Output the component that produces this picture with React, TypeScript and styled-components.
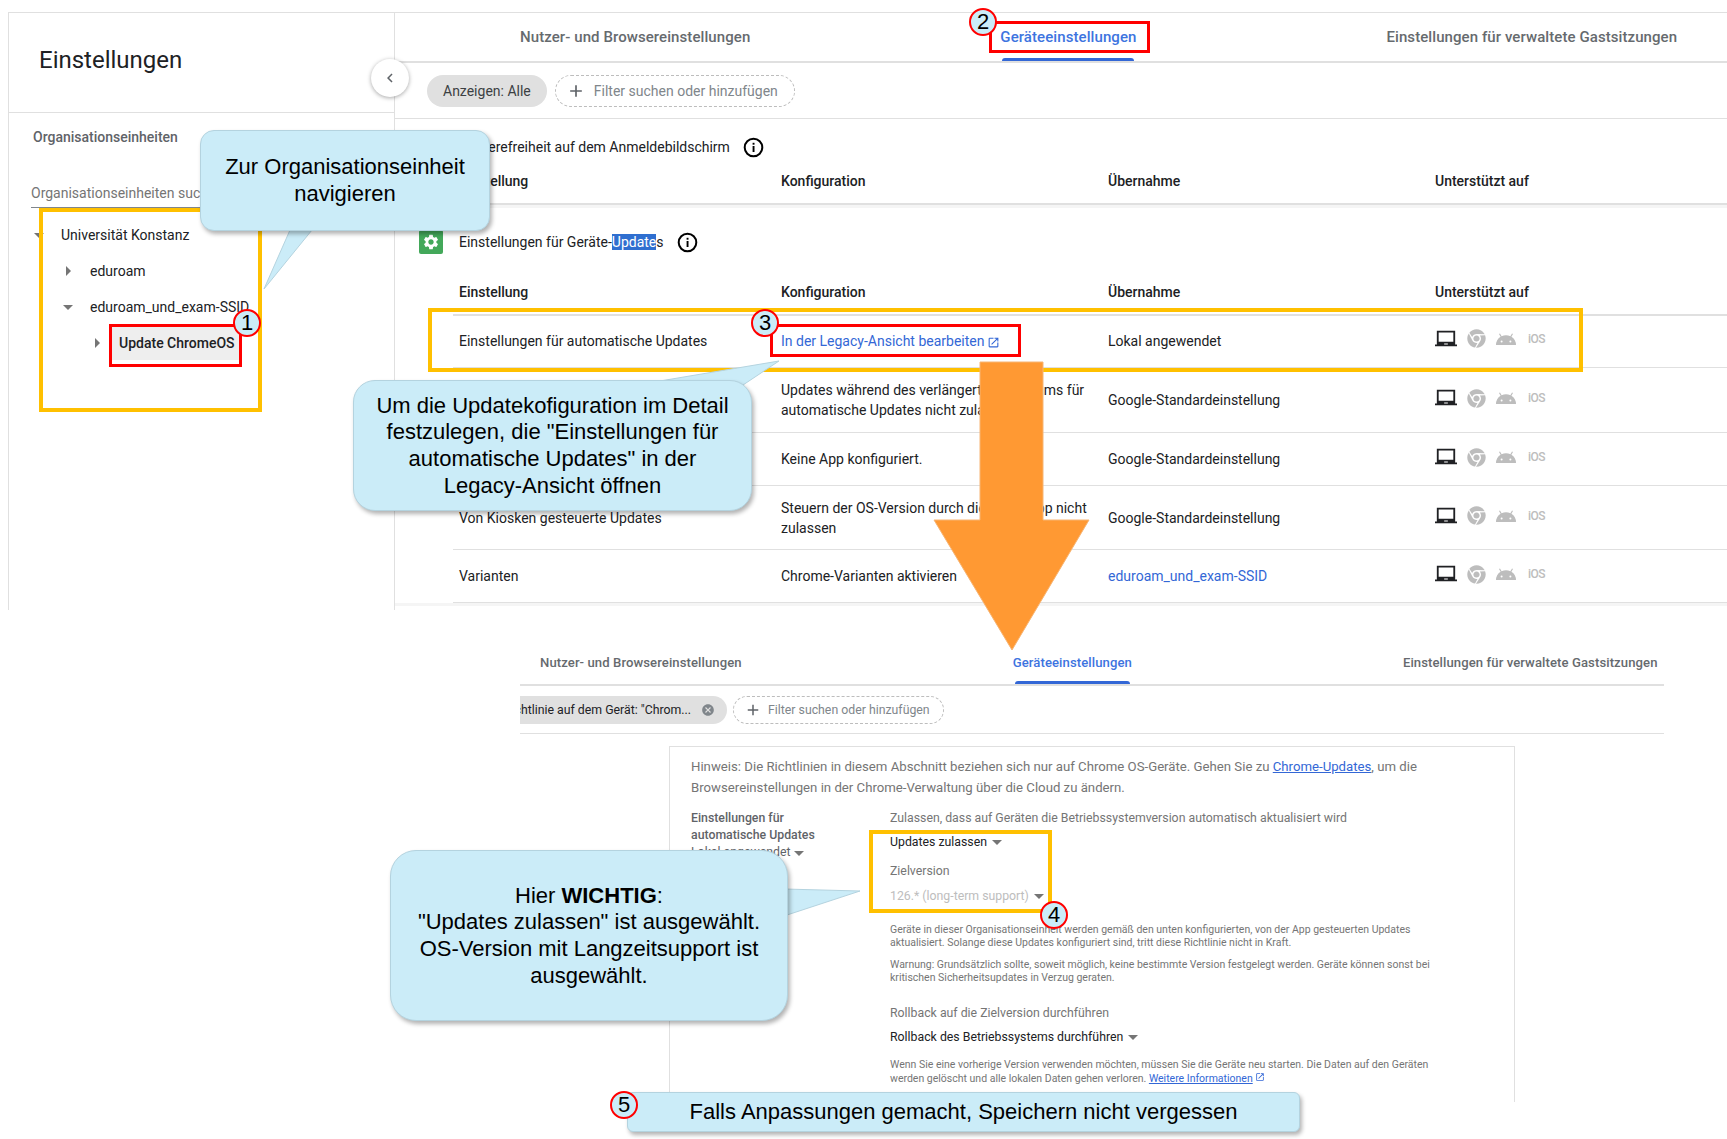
import React from 'react';
import styled, { createGlobalStyle } from 'styled-components';
import { FaChrome } from 'react-icons/fa';
import { MdAdd, MdCancel, MdChevronLeft, MdLaptopChromebook, MdOpenInNew, MdSettings } from 'react-icons/md';

const GlobalStyle = createGlobalStyle`
  html, body { margin: 0; padding: 0; background: #fff; }
  * { box-sizing: border-box; }
`;

const Page = styled.div`
  position: relative;
  width: 1727px;
  height: 1139px;
  overflow: hidden;
  background: #fff;
  font-family: Roboto, "Noto Sans", sans-serif;
  color: #202124;
`;

/* ---------- upper screenshot ---------- */
const TopShot = styled.div`
  display: flex;
  height: 598px;
  margin: 12px 0 0 8px;
  border-top: 1px solid #e0e0e0;
  border-left: 1px solid #e0e0e0;
`;
const Sidebar = styled.aside`
  flex: 0 0 386px;
  border-right: 1px solid #e0e0e0;
`;
const SideHeader = styled.div`
  display: flex;
  align-items: center;
  height: 100px;
  padding: 0 0 6px 30px;
  border-bottom: 1px solid #e0e0e0;
  font-size: 24px;
`;
const OrgTitle = styled.div`
  display: flex;
  align-items: center;
  height: 48px;
  padding-left: 24px;
  font-size: 14px;
  font-weight: 500;
  color: #5f6368;
`;
const OrgSearch = styled.div`
  display: flex;
  align-items: center;
  height: 47px;
  margin: 0 16px 0 22px;
  padding-top: 17px;
  border-bottom: 1px solid #80868b;
  font-size: 14px;
  color: #757575;
`;
const Tree = styled.div`
  margin-top: 9px;
  padding-left: 22px;
`;
const TreeRow = styled.div<{ $level: number }>`
  display: flex;
  align-items: center;
  height: 36px;
  margin-left: ${(p) => p.$level * 29}px;
  font-size: 14px;
`;
const CaretBox = styled.span`
  display: flex;
  align-items: center;
  justify-content: center;
  width: 16px;
  margin-right: 14px;
`;
const Caret = styled.span<{ $dir?: 'down' | 'right' }>`
  display: inline-block;
  width: 0;
  height: 0;
  ${(p) =>
    p.$dir === 'right'
      ? 'border-top: 5px solid transparent; border-bottom: 5px solid transparent; border-left: 5px solid #757575;'
      : 'border-left: 5px solid transparent; border-right: 5px solid transparent; border-top: 5px solid #757575;'}
`;
const TreeLabel = styled.span<{ $selected?: boolean }>`
  ${(p) =>
    p.$selected &&
    'margin-left: -7px; padding: 0 7px; line-height: 34px; font-weight: 500; background: #eeeeee;'}
`;

const Main = styled.main`
  flex: 1;
  min-width: 0;
`;
const Tabs = styled.div`
  display: flex;
  gap: 250px;
  height: 50px;
  padding-left: 125px;
  border-bottom: 2px solid #e0e0e0;
`;
const Tab = styled.div<{ $active?: boolean }>`
  position: relative;
  display: flex;
  align-items: center;
  font-size: 15px;
  font-weight: 500;
  letter-spacing: 0.08px;
  color: ${(p) => (p.$active ? '#3d74e0' : '#666a6e')};
  ${(p) =>
    p.$active &&
    `&::after {
      content: '';
      position: absolute;
      left: 2px;
      right: 2px;
      bottom: 0;
      height: 3px;
      border-radius: 3px 3px 0 0;
      background: #3367d6;
    }`}
`;
const FilterBar = styled.div`
  display: flex;
  align-items: center;
  gap: 8px;
  height: 56px;
  padding-left: 32px;
  border-bottom: 1px solid #e0e0e0;
`;
const Chip = styled.div`
  display: flex;
  align-items: center;
  height: 32px;
  padding: 0 16px;
  border-radius: 16px;
  background: #e0e0e0;
  font-size: 14px;
  color: #3c4043;
`;
const AddFilter = styled.div`
  display: flex;
  align-items: center;
  gap: 8px;
  height: 32px;
  padding: 0 16px 0 10px;
  border: 1px dashed #bdbdbd;
  border-radius: 16px;
  font-size: 14px;
  color: #80868b;
`;
const Section = styled.section<{ $top: number }>`
  padding-top: ${(p) => p.$top}px;
`;
const SectionTitle = styled.div`
  display: flex;
  align-items: center;
  height: 44px;
  margin-left: 24px;
  font-size: 14px;
`;
const TitleText = styled.span<{ $indent?: number }>`
  margin-left: ${(p) => p.$indent ?? 0}px;
`;
const GreenIcon = styled.span`
  display: flex;
  align-items: center;
  justify-content: center;
  width: 24px;
  height: 24px;
  border-radius: 2px;
  background: #43a85a;
  color: #fff;
`;
const Selected = styled.span`
  background: #2f6fd0;
  color: #fff;
`;
const Info = styled.svg`
  width: 21px;
  height: 21px;
  margin-left: 13px;
`;
const HeadRow = styled.div<{ $mt: number }>`
  display: grid;
  grid-template-columns: 322px 327px 327px 1fr;
  align-items: center;
  height: 35px;
  margin-top: ${(p) => p.$mt}px;
  margin-left: 58px;
  padding: 0 0 11px 6px;
  font-size: 14px;
  font-weight: 500;
  border-bottom: 2px solid #e0e0e0;
`;
const Band = styled.div`
  height: 3px;
  background: #f5f5f5;
`;
const Row = styled.div<{ $h: number; $pb: number }>`
  display: grid;
  grid-template-columns: 322px 327px 327px 1fr;
  align-items: center;
  height: ${(p) => p.$h}px;
  margin-left: 58px;
  padding: 0 0 ${(p) => p.$pb}px 6px;
  font-size: 14px;
  line-height: 20px;
  border-bottom: 1px solid #e0e0e0;
`;
const ConfigCell = styled.span`
  padding-right: 16px;
`;
const CellLink = styled.a`
  color: #3367d6;
  text-decoration: none;
`;
const LinkIcon = styled(MdOpenInNew)`
  margin-left: 3px;
  vertical-align: -3px;
`;
const Platforms = styled.div`
  display: flex;
  align-items: center;
  margin-bottom: 4px;
  color: #bdbdbd;
`;
const Laptop = styled(MdLaptopChromebook)`
  color: #202124;
`;
const Chrome = styled(FaChrome)`
  margin-left: 10px;
`;
const Android = styled.svg`
  width: 20px;
  height: 12px;
  margin-left: 10px;
`;
const Ios = styled.span`
  margin-left: 12px;
  font-size: 12px;
  font-weight: 500;
  letter-spacing: -0.6px;
`;

/* ---------- lower screenshot ---------- */
const BottomShot = styled.div`
  width: 1144px;
  margin: 30px 0 0 520px;
`;
const SmallTabs = styled.div`
  display: flex;
  gap: 271px;
  height: 46px;
  padding-left: 20px;
  border-bottom: 2px solid #e0e0e0;
`;
const SmallTab = styled(Tab)`
  font-size: 13.1px;
  letter-spacing: 0.09px;
`;
const SmallFilterBar = styled.div`
  display: flex;
  align-items: center;
  gap: 6px;
  height: 48px;
  border-bottom: 1px solid #e0e0e0;
`;
const ClippedChip = styled.div`
  display: flex;
  align-items: center;
  justify-content: flex-end;
  width: 207px;
  height: 28px;
  padding-right: 12px;
  overflow: hidden;
  white-space: nowrap;
  border-radius: 0 14px 14px 0;
  background: #e0e0e0;
  font-size: 12.3px;
`;
const ChipClose = styled(MdCancel)`
  flex: none;
  margin-left: 10px;
  color: #80868b;
`;
const SmallAddFilter = styled(AddFilter)`
  gap: 6px;
  height: 28px;
  padding: 0 13px 0 10px;
  font-size: 12.3px;
`;
const PolicyCard = styled.div`
  width: 846px;
  height: 356px;
  margin: 12px 0 0 149px;
  padding: 10px 20px 0 21px;
  border: 1px solid #e0e0e0;
  border-bottom: 0;
`;
const Hinweis = styled.p`
  margin: 0;
  font-size: 13.2px;
  line-height: 20.5px;
  color: #757575;
`;
const InlineLink = styled.a`
  color: #3367d6;
  text-decoration: underline;
`;
const PolicyRow = styled.div`
  display: flex;
  margin-top: 12px;
`;
const PolicyLabel = styled.div`
  flex: 0 0 199px;
  font-size: 12.3px;
  font-weight: 500;
  line-height: 17px;
  color: #5f6368;
`;
const PolicyState = styled.div`
  font-weight: 400;
`;
const PolicyBody = styled.div`
  flex: 1;
  min-width: 0;
`;
const FieldLabel = styled.div<{ $mt?: number }>`
  margin-top: ${(p) => p.$mt ?? 0}px;
  font-size: 12.3px;
  line-height: 17px;
  color: #757575;
`;
const SelectValue = styled.div<{ $mt: number; $disabled?: boolean }>`
  display: flex;
  align-items: center;
  gap: 5px;
  margin-top: ${(p) => p.$mt}px;
  font-size: 12.3px;
  line-height: 17px;
  color: ${(p) => (p.$disabled ? '#bdbdbd' : '#202124')};
`;
const Note = styled.p<{ $mt: number; $lh: number }>`
  width: 570px;
  margin: ${(p) => p.$mt}px 0 0;
  font-size: 10.5px;
  line-height: ${(p) => p.$lh}px;
  color: #757575;
`;

/* ---------- annotations on top of the screenshots ---------- */
const Frame = styled.div<{ $x: number; $y: number; $w: number; $h: number; $color: string; $line: number }>`
  position: absolute;
  left: ${(p) => p.$x}px;
  top: ${(p) => p.$y}px;
  width: ${(p) => p.$w}px;
  height: ${(p) => p.$h}px;
  border: ${(p) => p.$line}px solid ${(p) => p.$color};
`;
const CollapseButton = styled.div`
  position: absolute;
  left: 371px;
  top: 59px;
  display: flex;
  align-items: center;
  justify-content: center;
  width: 38px;
  height: 38px;
  border-radius: 50%;
  background: #fff;
  box-shadow: 0 1px 4px rgba(0, 0, 0, 0.35);
  color: #5f6368;
`;
const Callout = styled.div<{ $x: number; $y: number; $w: number; $h: number; $r: number }>`
  position: absolute;
  left: ${(p) => p.$x}px;
  top: ${(p) => p.$y}px;
  display: flex;
  align-items: center;
  justify-content: center;
  width: ${(p) => p.$w}px;
  height: ${(p) => p.$h}px;
  padding-top: 1px;
  border: 1px solid #b4d3df;
  border-radius: ${(p) => p.$r}px;
  background: #cbecf8;
  box-shadow: 2px 3px 4px rgba(0, 0, 0, 0.3);
  font-family: "Liberation Sans", Arial, sans-serif;
  font-size: 22px;
  line-height: 26.6px;
  text-align: center;
  color: #000;
`;
const Tail = styled.svg<{ $x: number; $y: number }>`
  position: absolute;
  left: ${(p) => p.$x}px;
  top: ${(p) => p.$y}px;
`;
const Badge = styled.div<{ $x: number; $y: number }>`
  position: absolute;
  left: ${(p) => p.$x - 14}px;
  top: ${(p) => p.$y - 14}px;
  display: flex;
  align-items: center;
  justify-content: center;
  width: 28px;
  height: 28px;
  border: 2px solid #ff0000;
  border-radius: 50%;
  background: #cbecf8;
  font-family: "Liberation Sans", Arial, sans-serif;
  font-size: 22px;
  color: #000;
`;

const InfoIcon = () => (
  <Info viewBox="0 0 21 21">
    <circle cx="10.5" cy="10.5" r="8.8" fill="none" stroke="#000" strokeWidth="2" />
    <rect x="9.6" y="9" width="1.9" height="6" fill="#000" />
    <rect x="9.6" y="5.8" width="1.9" height="1.9" fill="#000" />
  </Info>
);

const PlatformIcons = () => (
  <Platforms>
    <Laptop size={22} />
    <Chrome size={19} />
    <Android viewBox="0 0 20 12">
      <path
        fill="currentColor"
        d="M0 12a10 10 0 0 1 4.6-8.3L3 1l1-.6 1.6 2.8A10 10 0 0 1 10 2.2c1.6 0 3.1.4 4.4 1L16 .4l1 .6-1.6 2.7A10 10 0 0 1 20 12z"
      />
      <circle cx="5.6" cy="8.4" r="1" fill="#fff" />
      <circle cx="14.4" cy="8.4" r="1" fill="#fff" />
    </Android>
    <Ios>iOS</Ios>
  </Platforms>
);

type TableRow = { h: number; pb: number; name: string; config: React.ReactNode; source: React.ReactNode };

const rows: TableRow[] = [
  {
    h: 52,
    pb: 2,
    name: 'Einstellungen für automatische Updates',
    config: (
      <CellLink>
        In der Legacy-Ansicht bearbeiten
        <LinkIcon size={13} />
      </CellLink>
    ),
    source: 'Lokal angewendet',
  },
  {
    h: 65,
    pb: 0,
    name: 'Automatische Updates',
    config: (
      <>
        Updates während des verlängerten Zeitraums für
        <br />
        automatische Updates nicht zulassen
      </>
    ),
    source: 'Google-Standardeinstellung',
  },
  {
    h: 53,
    pb: 0,
    name: 'App-gesteuerte Updates',
    config: 'Keine App konfiguriert.',
    source: 'Google-Standardeinstellung',
  },
  {
    h: 64,
    pb: 0,
    name: 'Von Kiosken gesteuerte Updates',
    config: 'Steuern der OS-Version durch die Kiosk-App nicht zulassen',
    source: 'Google-Standardeinstellung',
  },
  {
    h: 53,
    pb: 0,
    name: 'Varianten',
    config: 'Chrome-Varianten aktivieren',
    source: <CellLink>eduroam_und_exam-SSID</CellLink>,
  },
];

const TableHead = ({ mt }: { mt: number }) => (
  <HeadRow $mt={mt}>
    <span>Einstellung</span>
    <span>Konfiguration</span>
    <span>Übernahme</span>
    <span>Unterstützt auf</span>
  </HeadRow>
);

export default function App() {
  return (
    <Page>
      <GlobalStyle />
      <TopShot>
        <Sidebar>
          <SideHeader>Einstellungen</SideHeader>
          <OrgTitle>Organisationseinheiten</OrgTitle>
          <OrgSearch>Organisationseinheiten suchen</OrgSearch>
          <Tree>
            <TreeRow $level={0}>
              <CaretBox><Caret $dir="down" /></CaretBox>
              <TreeLabel>Universität Konstanz</TreeLabel>
            </TreeRow>
            <TreeRow $level={1}>
              <CaretBox><Caret $dir="right" /></CaretBox>
              <TreeLabel>eduroam</TreeLabel>
            </TreeRow>
            <TreeRow $level={1}>
              <CaretBox><Caret $dir="down" /></CaretBox>
              <TreeLabel>eduroam_und_exam-SSID</TreeLabel>
            </TreeRow>
            <TreeRow $level={2}>
              <CaretBox><Caret $dir="right" /></CaretBox>
              <TreeLabel $selected>Update ChromeOS</TreeLabel>
            </TreeRow>
          </Tree>
        </Sidebar>
        <Main>
          <Tabs>
            <Tab>Nutzer- und Browsereinstellungen</Tab>
            <Tab $active>Geräteeinstellungen</Tab>
            <Tab>Einstellungen für verwaltete Gastsitzungen</Tab>
          </Tabs>
          <FilterBar>
            <Chip>Anzeigen: Alle</Chip>
            <AddFilter>
              <MdAdd size={20} color="#5f6368" />
              Filter suchen oder hinzufügen
            </AddFilter>
          </FilterBar>
          <Section $top={6}>
            <SectionTitle>
              <TitleText $indent={40}>Barrierefreiheit auf dem Anmeldebildschirm</TitleText>
              <InfoIcon />
            </SectionTitle>
            <TableHead mt={1} />
          </Section>
          <Band />
          <Section $top={12}>
            <SectionTitle>
              <GreenIcon><MdSettings size={18} /></GreenIcon>
              <TitleText $indent={16}>
                Einstellungen für Geräte-<Selected>Update</Selected>s
              </TitleText>
              <InfoIcon />
            </SectionTitle>
            <TableHead mt={17} />
            {rows.map((r) => (
              <Row key={r.name} $h={r.h} $pb={r.pb}>
                <span>{r.name}</span>
                <ConfigCell>{r.config}</ConfigCell>
                <span>{r.source}</span>
                <PlatformIcons />
              </Row>
            ))}
          </Section>
          <Band />
        </Main>
      </TopShot>

      <BottomShot>
        <SmallTabs>
          <SmallTab>Nutzer- und Browsereinstellungen</SmallTab>
          <SmallTab $active>Geräteeinstellungen</SmallTab>
          <SmallTab>Einstellungen für verwaltete Gastsitzungen</SmallTab>
        </SmallTabs>
        <SmallFilterBar>
          <ClippedChip>
            Richtlinie auf dem Gerät: "Chrom...
            <ChipClose size={14} />
          </ClippedChip>
          <SmallAddFilter>
            <MdAdd size={18} color="#5f6368" />
            Filter suchen oder hinzufügen
          </SmallAddFilter>
        </SmallFilterBar>
        <PolicyCard>
          <Hinweis>
            Hinweis: Die Richtlinien in diesem Abschnitt beziehen sich nur auf Chrome OS-Geräte. Gehen Sie zu{' '}
            <InlineLink>Chrome-Updates</InlineLink>, um die
            <br />
            Browsereinstellungen in der Chrome-Verwaltung über die Cloud zu ändern.
          </Hinweis>
          <PolicyRow>
            <PolicyLabel>
              Einstellungen für
              <br />
              automatische Updates
              <PolicyState>
                Lokal angewendet <Caret $dir="down" />
              </PolicyState>
            </PolicyLabel>
            <PolicyBody>
              <FieldLabel>Zulassen, dass auf Geräten die Betriebssystemversion automatisch aktualisiert wird</FieldLabel>
              <SelectValue $mt={7}>
                Updates zulassen <Caret $dir="down" />
              </SelectValue>
              <FieldLabel $mt={12}>Zielversion</FieldLabel>
              <SelectValue $mt={8} $disabled>
                126.* (long-term support) <Caret $dir="down" />
              </SelectValue>
              <Note $mt={18} $lh={13}>
                Geräte in dieser Organisationseinheit werden gemäß den unten konfigurierten, von der App gesteuerten Updates
                aktualisiert. Solange diese Updates konfiguriert sind, tritt diese Richtlinie nicht in Kraft.
              </Note>
              <Note $mt={9} $lh={13}>
                Warnung: Grundsätzlich sollte, soweit möglich, keine bestimmte Version festgelegt werden. Geräte können sonst bei
                kritischen Sicherheitsupdates in Verzug geraten.
              </Note>
              <FieldLabel $mt={21}>Rollback auf die Zielversion durchführen</FieldLabel>
              <SelectValue $mt={7}>
                Rollback des Betriebssystems durchführen <Caret $dir="down" />
              </SelectValue>
              <Note $mt={12} $lh={14}>
                Wenn Sie eine vorherige Version verwenden möchten, müssen Sie die Geräte neu starten. Die Daten auf den Geräten
                werden gelöscht und alle lokalen Daten gehen verloren. <InlineLink>Weitere Informationen</InlineLink>{' '}
                <MdOpenInNew size={10} color="#3367d6" />
              </Note>
            </PolicyBody>
          </PolicyRow>
        </PolicyCard>
      </BottomShot>

      <CollapseButton><MdChevronLeft size={18} /></CollapseButton>

      <Frame $x={39} $y={208} $w={223} $h={204} $color="#ffc000" $line={4} />
      <Frame $x={428} $y={308} $w={1155} $h={64} $color="#ffc000" $line={4} />
      <Frame $x={869} $y={830} $w={183} $h={83} $color="#ffc000" $line={4} />
      <Frame $x={109} $y={324} $w={133} $h={43} $color="#ff0000" $line={3} />
      <Frame $x={989} $y={21} $w={161} $h={32} $color="#ff0000" $line={3} />
      <Frame $x={770} $y={324} $w={251} $h={33} $color="#ff0000" $line={3} />

      <Tail $x={260} $y={225} width="60" height="70">
        <polygon points="30,5 52,5 4,64" fill="#cbecf8" stroke="#b4d3df" />
      </Tail>
      <Callout $x={200} $y={130} $w={290} $h={101} $r={14}>
        Zur Organisationseinheit
        <br />
        navigieren
      </Callout>

      <Tail $x={650} $y={358} width="135" height="30">
        <polygon points="4,24 129,3 93,27" fill="#cbecf8" stroke="#b4d3df" />
      </Tail>
      <Callout $x={353} $y={380} $w={399} $h={131} $r={22}>
        Um die Updatekofiguration im Detail
        <br />
        festzulegen, die "Einstellungen für
        <br />
        automatische Updates" in der
        <br />
        Legacy-Ansicht öffnen
      </Callout>

      <Tail $x={780} $y={885} width="85" height="35">
        <polygon points="4,4 80,6 4,31" fill="#cbecf8" stroke="#b4d3df" />
      </Tail>
      <Callout $x={390} $y={850} $w={398} $h={171} $r={26}>
        <div>
          Hier <b>WICHTIG</b>:
          <br />
          "Updates zulassen" ist ausgewählt.
          <br />
          OS-Version mit Langzeitsupport ist
          <br />
          ausgewählt.
        </div>
      </Callout>

      <Callout $x={627} $y={1092} $w={673} $h={40} $r={6}>
        Falls Anpassungen gemacht, Speichern nicht vergessen
      </Callout>

      <Tail $x={930} $y={358} width="163" height="296">
        <polygon points="50,4 113,4 113,162 159,162 82,292 4,162 50,162" fill="#ff9933" stroke="#f7b574" />
      </Tail>

      <Badge $x={247} $y={323}>1</Badge>
      <Badge $x={983} $y={22}>2</Badge>
      <Badge $x={765} $y={323}>3</Badge>
      <Badge $x={1054} $y={915}>4</Badge>
      <Badge $x={624} $y={1105}>5</Badge>
    </Page>
  );
}
